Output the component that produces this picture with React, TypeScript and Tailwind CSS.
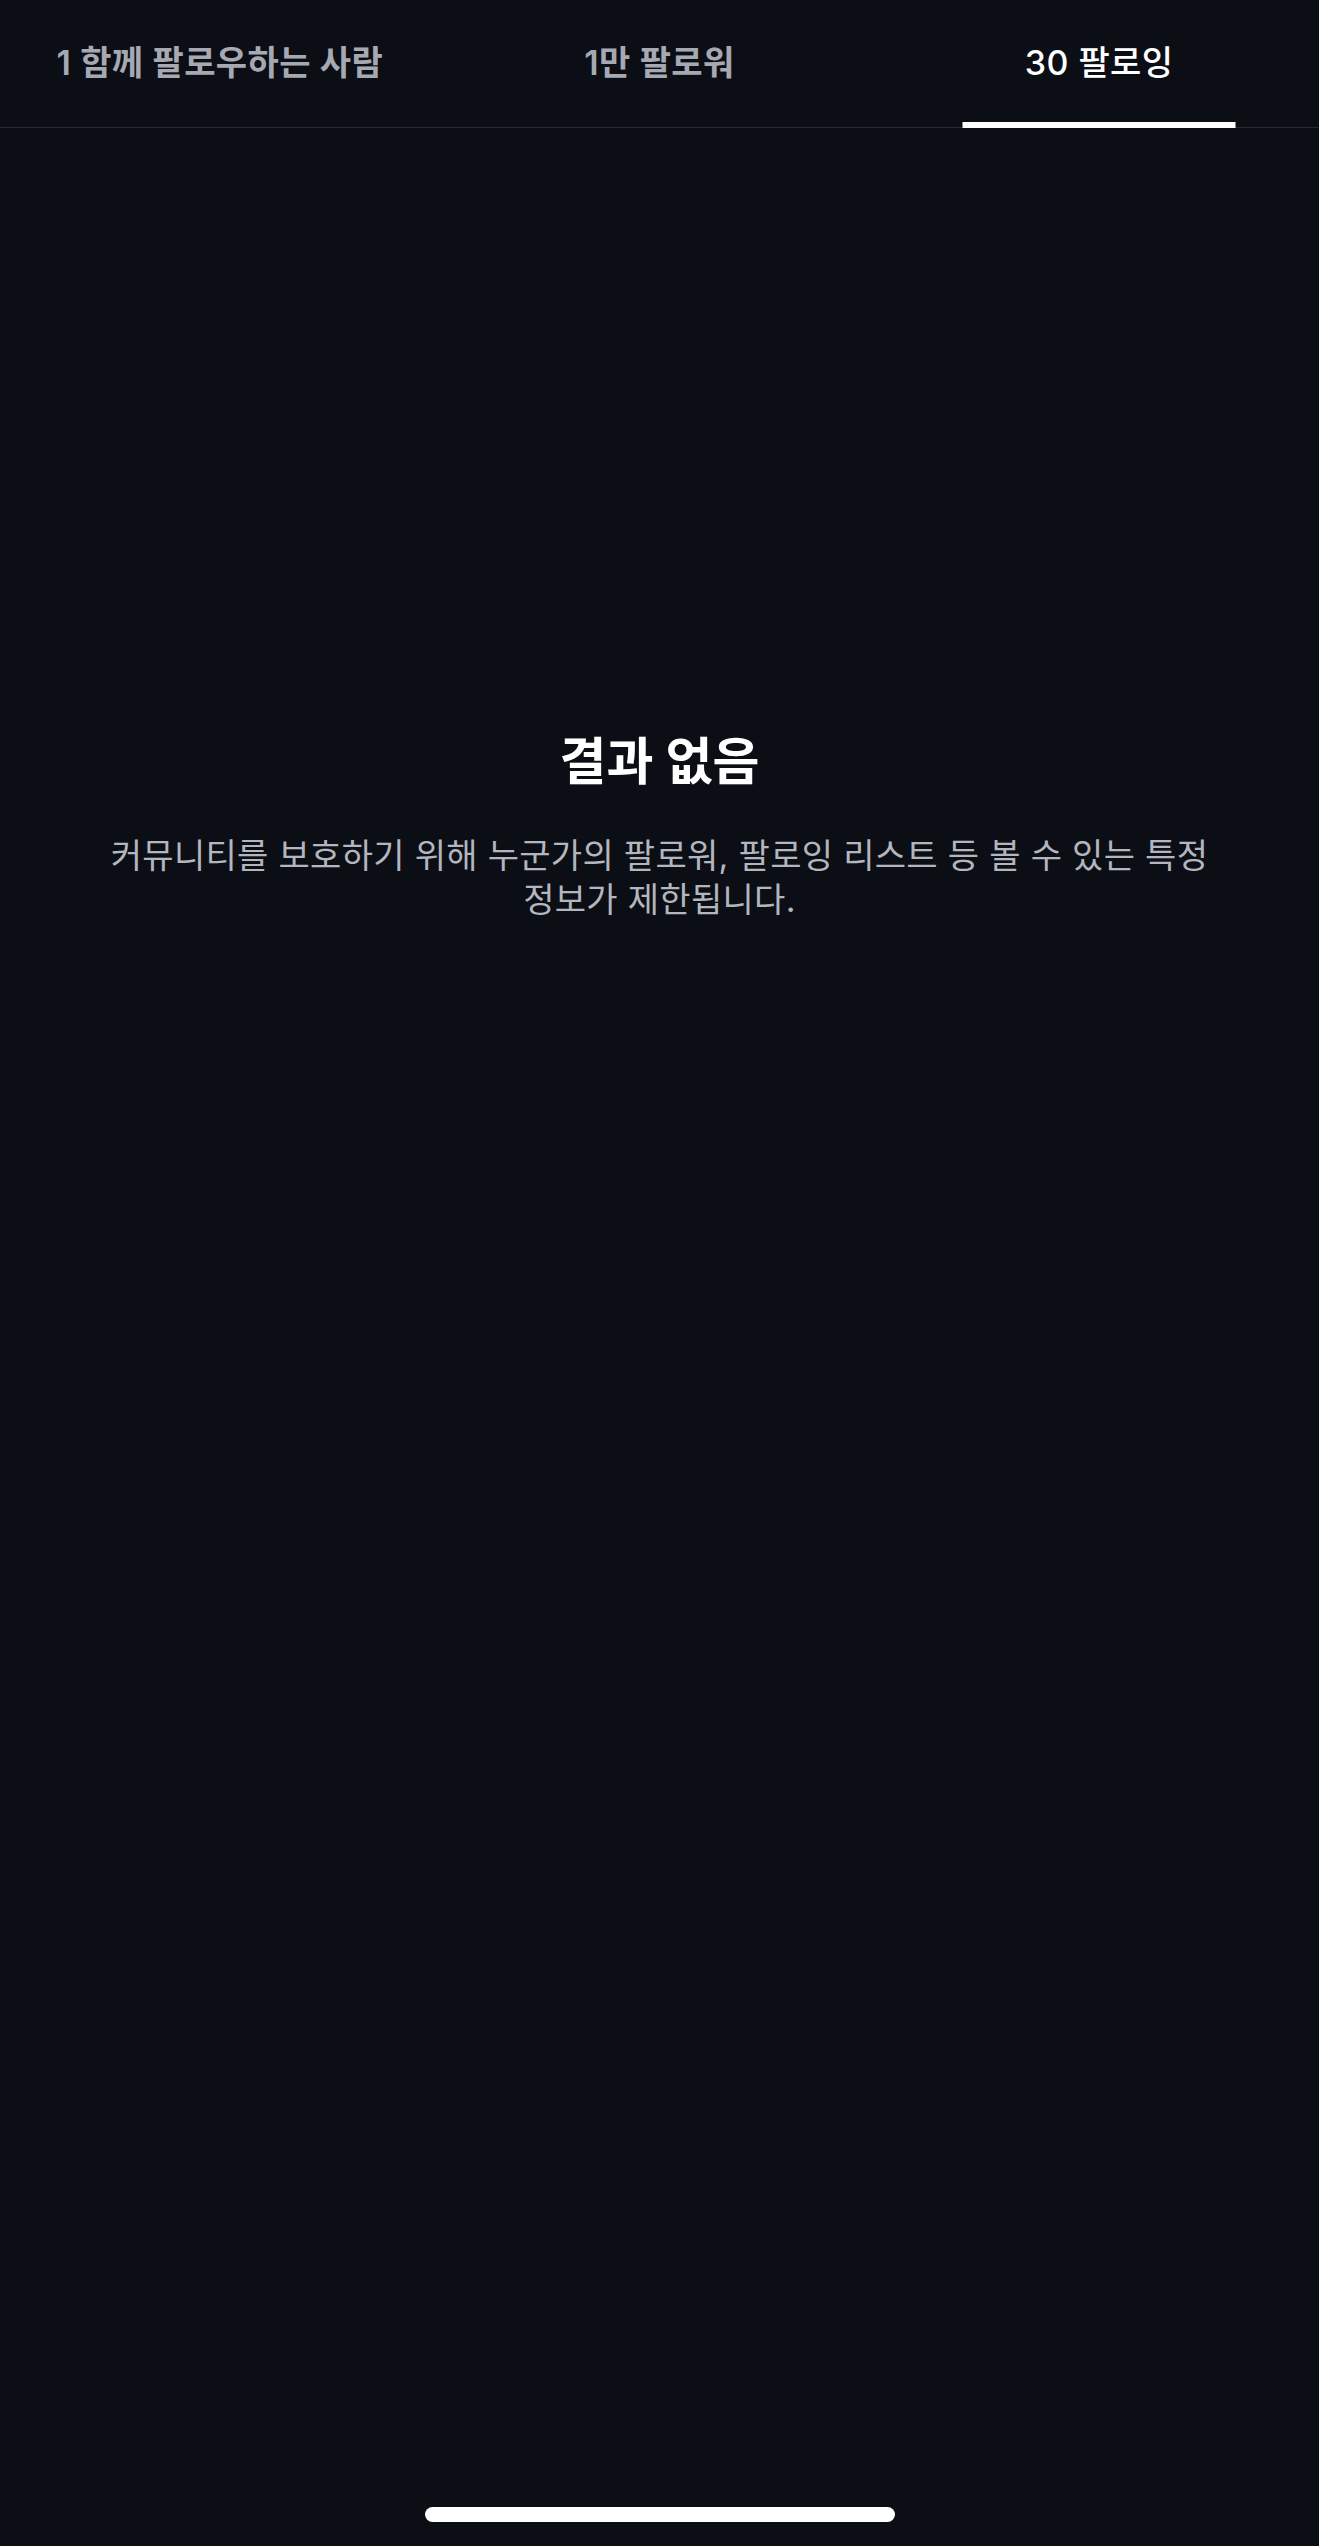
const tabs = [
  { label: "1 함께 팔로우하는 사람", active: false },
  { label: "1만 팔로워", active: false },
  { label: "30 팔로잉", active: true },
];

function TabBar() {
  return (
    <div className="grid h-[128px] grid-cols-3 border-b border-[#262a33]">
      {tabs.map((tab) => (
        <div key={tab.label} className="relative flex items-center justify-center pb-[2px]">
          <span
            className={
              tab.active
                ? "text-[34px] font-medium tracking-[0.4px] text-white"
                : "text-[34px] font-semibold tracking-[0.4px] text-[#a6a9b2]"
            }
          >
            {tab.label}
          </span>
          {tab.active && (
            <div className="absolute bottom-[-1px] left-1/2 h-[6px] w-[273px] -translate-x-1/2 bg-white" />
          )}
        </div>
      ))}
    </div>
  );
}

export default function App() {
  return (
    <div
      className="flex h-[2546px] w-full flex-col bg-[#0b0e15]"
      style={{ fontFamily: 'Inter, "Noto Sans CJK KR", "Noto Sans", sans-serif' }}
    >
      <TabBar />
      <main className="flex flex-1 flex-col items-center px-[96px] pt-[604px] text-center">
        <h1 className="text-[51px] font-bold leading-[60px] text-white">결과 없음</h1>
        <p className="mt-[42px] text-[34px] leading-[44px] tracking-[0.3px] text-[#b3b6be]">
          커뮤니티를 보호하기 위해 누군가의 팔로워, 팔로잉 리스트 등 볼 수 있는 특정 정보가 제한됩니다.
        </p>
      </main>
      <div className="flex justify-center pb-[24px]">
        <div className="h-[15px] w-[470px] rounded-full bg-white" />
      </div>
    </div>
  );
}
